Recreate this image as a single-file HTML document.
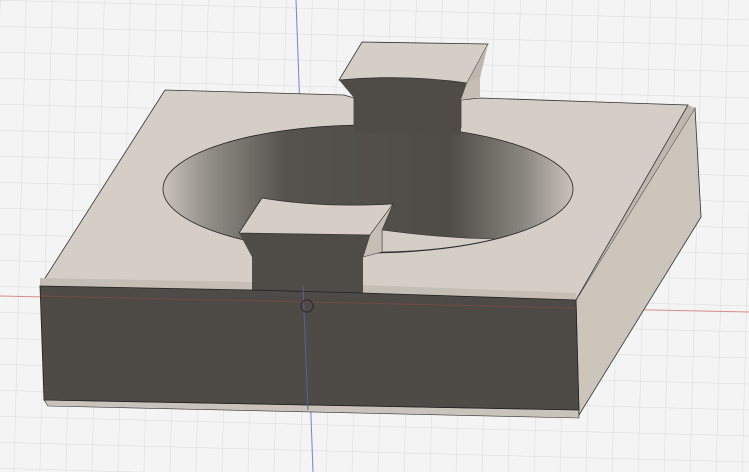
<!DOCTYPE html>
<html><head><style>html,body{margin:0;padding:0;background:#f4f4f4;overflow:hidden}svg{display:block}</style></head>
<body>
<svg width="749" height="472" viewBox="0 0 749 472" xmlns="http://www.w3.org/2000/svg">
<defs>
<pattern id="g" width="26" height="26" patternUnits="userSpaceOnUse" patternTransform="rotate(1.5)">
<path d="M0 0H26M0 0V26" stroke="#dadada" stroke-width="1" fill="none"/>
</pattern>
<linearGradient id="wall" x1="0" x2="1">
<stop offset="0" stop-color="#c9c3bb"/><stop offset="0.12" stop-color="#8e8a84"/><stop offset="0.3" stop-color="#55524d"/><stop offset="0.7" stop-color="#4f4c47"/><stop offset="0.88" stop-color="#8a8680"/><stop offset="1" stop-color="#c9c3bb"/>
</linearGradient>
</defs>
<rect width="749" height="472" fill="#f4f4f4"/>
<rect width="749" height="472" fill="url(#g)"/>
<line x1="0" y1="296" x2="749" y2="312" stroke="#d88a8a" stroke-width="1"/>
<line x1="296" y1="0" x2="313" y2="472" stroke="#7b7fd0" stroke-width="1"/>
<polygon points="44,400 579,410 579,418 48,406" fill="#c9c3bb" stroke="#333" stroke-width="0.6"/>
<polygon points="576,300 695,108 701,217 579,415" fill="#cbc5bc" stroke="#333" stroke-width="0.8"/>
<polygon points="570,296 688,105 695,108 576,300" fill="#bdb7ae"/>
<polygon points="40,286 165,90 344,95 354,98 354,125 461,128 461,100 480,98 688,105 576,300" fill="#d4cec6" stroke="#333" stroke-width="0.8"/>
<polygon points="40,278 252,282 252,290 40,286" fill="#c4beb5"/>
<polygon points="363,285 576,293 576,300 363,293" fill="#c4beb5"/>
<ellipse cx="368" cy="189" rx="205" ry="64" fill="url(#wall)" stroke="#222" stroke-width="0.8"/>
<path d="M382,230 Q440,238 495,239 A205,64 0 0 1 382,252 Z" fill="#d4cec6" stroke="#333" stroke-width="0.6"/>
<path d="M339,80 Q405,74 467,83 L461,100 L461,135 L354,132 L354,98 Z" fill="#4f4c47"/>
<path d="M362,42 L488,44 L467,83 Q405,74 339,80 Z" fill="#d4cec6" stroke="#333" stroke-width="0.8"/>
<polygon points="488,44 480,78 467,83" fill="#bdb7ae"/>
<polygon points="480,78 480,97 461,100 467,83" fill="#c4beb5"/>
<path d="M239,233 L370,235 L363,257 L363,293 L252,290 L252,257 Z" fill="#4f4c47"/>
<path d="M262,198 Q320,208 393,204 L370,235 L239,233 Z" fill="#d4cec6" stroke="#333" stroke-width="0.8"/>
<polygon points="393,204 382,230 382,252 363,257 370,235" fill="#c4beb5" stroke="#333" stroke-width="0.5"/>
<polygon points="40,286 252,290 363,293 576,300 579,410 44,400" fill="#4e4b46" stroke="#222" stroke-width="0.8"/>
<line x1="40" y1="296" x2="576" y2="308" stroke="#8a4a45" stroke-width="1" opacity="0.6"/>
<line x1="303" y1="286" x2="308" y2="410" stroke="#5a5e9a" stroke-width="1"/>
<circle cx="307" cy="306" r="6" fill="none" stroke="#333" stroke-width="1.5"/>
</svg>
</body></html>
